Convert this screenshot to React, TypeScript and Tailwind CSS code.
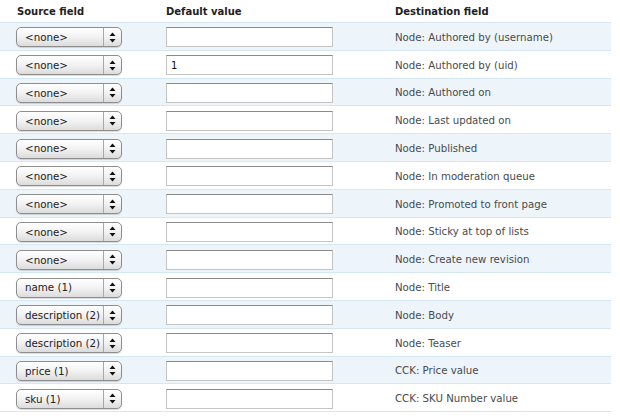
import React from "react";

const rows = [
  { src: "<none>", val: "", dest: "Node: Authored by (username)" },
  { src: "<none>", val: "1", dest: "Node: Authored by (uid)" },
  { src: "<none>", val: "", dest: "Node: Authored on" },
  { src: "<none>", val: "", dest: "Node: Last updated on" },
  { src: "<none>", val: "", dest: "Node: Published" },
  { src: "<none>", val: "", dest: "Node: In moderation queue" },
  { src: "<none>", val: "", dest: "Node: Promoted to front page" },
  { src: "<none>", val: "", dest: "Node: Sticky at top of lists" },
  { src: "<none>", val: "", dest: "Node: Create new revision" },
  { src: "name (1)", val: "", dest: "Node: Title" },
  { src: "description (2)", val: "", dest: "Node: Body" },
  { src: "description (2)", val: "", dest: "Node: Teaser" },
  { src: "price (1)", val: "", dest: "CCK: Price value" },
  { src: "sku (1)", val: "", dest: "CCK: SKU Number value" },
];

function FakeSelect({ label }: { label: string }) {
  return (
    <div className="flex h-[20px] w-[106px] items-center rounded-[5px] border border-[#8e8e8e] bg-gradient-to-b from-[#ffffff] via-[#f2f2f2] to-[#dcdcdc] shadow-[0_1px_1px_rgba(0,0,0,0.15)]">
      <span className="flex-1 whitespace-nowrap pl-[8px] text-[10.3px] leading-none text-[#222]">{label}</span>
      <div className="flex h-full w-[18px] items-center justify-center border-l border-[#a8a8a8]">
        <svg width="7" height="11" viewBox="0 0 7 11">
          <path d="M3.5 0.5 L6.5 4 L0.5 4 Z" fill="#111" />
          <path d="M0.5 7 L6.5 7 L3.5 10.5 Z" fill="#111" />
        </svg>
      </div>
    </div>
  );
}

export default function App() {
  return (
    <div className="h-[420px] w-[620px] overflow-hidden bg-white" style={{ fontFamily: '"DejaVu Sans", Verdana, sans-serif' }}>
      <div className="w-[611px]">
        <div className="flex h-[23px] items-center border-b border-[#d3e7f4] pt-[1px] text-[10px] font-bold text-[#222]">
          <div className="w-[166px] pl-[17px]">Source field</div>
          <div className="w-[229px]">Default value</div>
          <div className="flex-1">Destination field</div>
        </div>
        {rows.map((row, i) => (
          <div
            key={i}
            className={`flex h-[27.8px] items-center border-b border-[#d3e7f4] pt-[2px] ${i % 2 === 0 ? "bg-[#edf5fa]" : "bg-white"}`}
          >
            <div className="w-[166px] pl-[16px]">
              <FakeSelect label={row.src} />
            </div>
            <div className="w-[229px]">
              <div className="flex h-[20px] w-[167px] items-center border border-[#c4c4c4] border-t-[#8a8a8a] bg-white pl-[4px] text-[10px] text-[#111]">
                {row.val}
              </div>
            </div>
            <div className="flex-1 text-[10.2px] text-[#4a4a4a]">{row.dest}</div>
          </div>
        ))}
      </div>
    </div>
  );
}
